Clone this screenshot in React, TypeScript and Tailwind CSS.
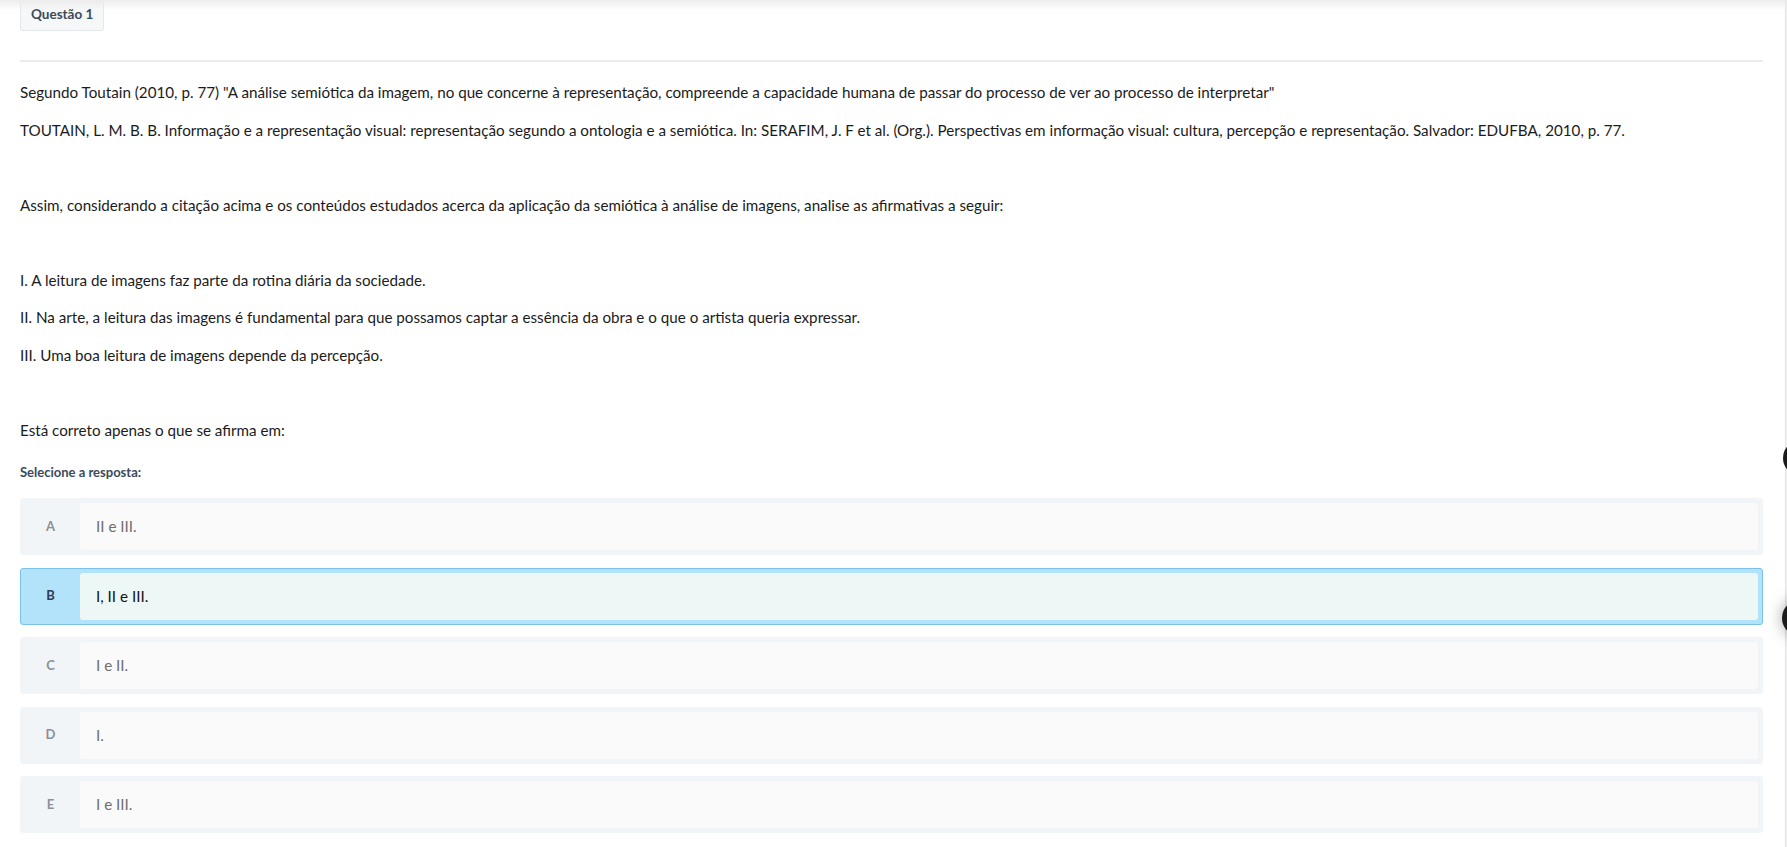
const options = [
  { letter: "A", text: "II e III.", selected: false },
  { letter: "B", text: "I, II e III.", selected: true },
  { letter: "C", text: "I e II.", selected: false },
  { letter: "D", text: "I.", selected: false },
  { letter: "E", text: "I e III.", selected: false },
];

const font = { fontFamily: "Lato, 'Noto Sans', sans-serif" };

export default function App() {
  return (
    <div className="relative w-full h-[847px] overflow-hidden bg-white" style={font}>
      {/* header shadow from the fixed bar above */}
      <div className="absolute left-0 top-0 w-full h-[10px] bg-gradient-to-b from-[#ececec] to-transparent pointer-events-none z-10" />

      {/* right side panel edge + floating buttons */}
      <div className="absolute left-[1785px] top-0 w-[10px] h-full bg-[#f2f2f2] border-l border-[#e3e3e3]" />
      <div className="absolute left-[1783px] top-[440px] w-9 h-9 rounded-full bg-[#1c1c1c]" />
      <div className="absolute left-[1782px] top-[600px] w-9 h-9 rounded-full bg-[#1c1c1c] shadow-[0_0_16px_rgba(0,0,0,0.35)]" />

      <div className="ml-[20px] w-[1743px]">
        <div className="inline-block h-[31px] px-[10px] pt-[5px] bg-[#f5f7f9] border border-t-0 border-[#e4e7eb] rounded-b-[3px] text-[13.5px] font-bold text-[#3b4a5b] leading-[18px]">
          Questão 1
        </div>

        <div className="mt-[29px] h-[2px] bg-[#ebebeb]" />

        <div className="mt-[19px] text-[15.2px] leading-[22.5px] text-[#1b1b1b]">
          <p className="mb-[15px]">
            Segundo Toutain (2010, p. 77) "A análise semiótica da imagem, no que concerne à representação, compreende a capacidade humana de passar do processo de ver ao processo de interpretar"
          </p>
          <p className="mb-[15px]">
            TOUTAIN, L. M. B. B. Informação e a representação visual: representação segundo a ontologia e a semiótica. In: SERAFIM, J. F et al. (Org.). Perspectivas em informação visual: cultura, percepção e representação. Salvador: EDUFBA, 2010, p. 77.
          </p>
          <p className="mb-[15px]">&nbsp;</p>
          <p className="mb-[15px]">
            Assim, considerando a citação acima e os conteúdos estudados acerca da aplicação da semiótica à análise de imagens, analise as afirmativas a seguir:
          </p>
          <p className="mb-[15px]">&nbsp;</p>
          <p className="mb-[15px]">I. A leitura de imagens faz parte da rotina diária da sociedade.</p>
          <p className="mb-[15px]">
            II. Na arte, a leitura das imagens é fundamental para que possamos captar a essência da obra e o que o artista queria expressar.
          </p>
          <p className="mb-[15px]">III. Uma boa leitura de imagens depende da percepção.</p>
          <p className="mb-[15px]">&nbsp;</p>
          <p>Está correto apenas o que se afirma em:</p>
        </div>

        <div className="mt-[22px] text-[13px] font-bold leading-[18px] text-[#3b4a5b]">Selecione a resposta:</div>

        <div className="mt-[17px] flex flex-col gap-[12.5px]">
          {options.map((o) => (
            <div
              key={o.letter}
              className={`flex h-[57px] rounded-[3px] border ${
                o.selected ? "bg-[#b3e2fb] border-[#7cc1ea]" : "bg-[#f2f5f7] border-[#f2f5f7]"
              }`}
            >
              <div
                className={`w-[59px] flex items-center justify-center text-[13px] font-bold ${
                  o.selected ? "text-[#2c3e50]" : "text-[#8a9096]"
                }`}
              >
                {o.letter}
              </div>
              <div
                className={`flex-1 my-[4px] mr-[4px] rounded-[3px] flex items-center pl-[16px] text-[15.2px] ${
                  o.selected ? "bg-[#edf8f6] text-[#111111]" : "bg-[#fafafa] text-[#6e6e6e]"
                }`}
              >
                {o.text}
              </div>
            </div>
          ))}
        </div>
      </div>
    </div>
  );
}
